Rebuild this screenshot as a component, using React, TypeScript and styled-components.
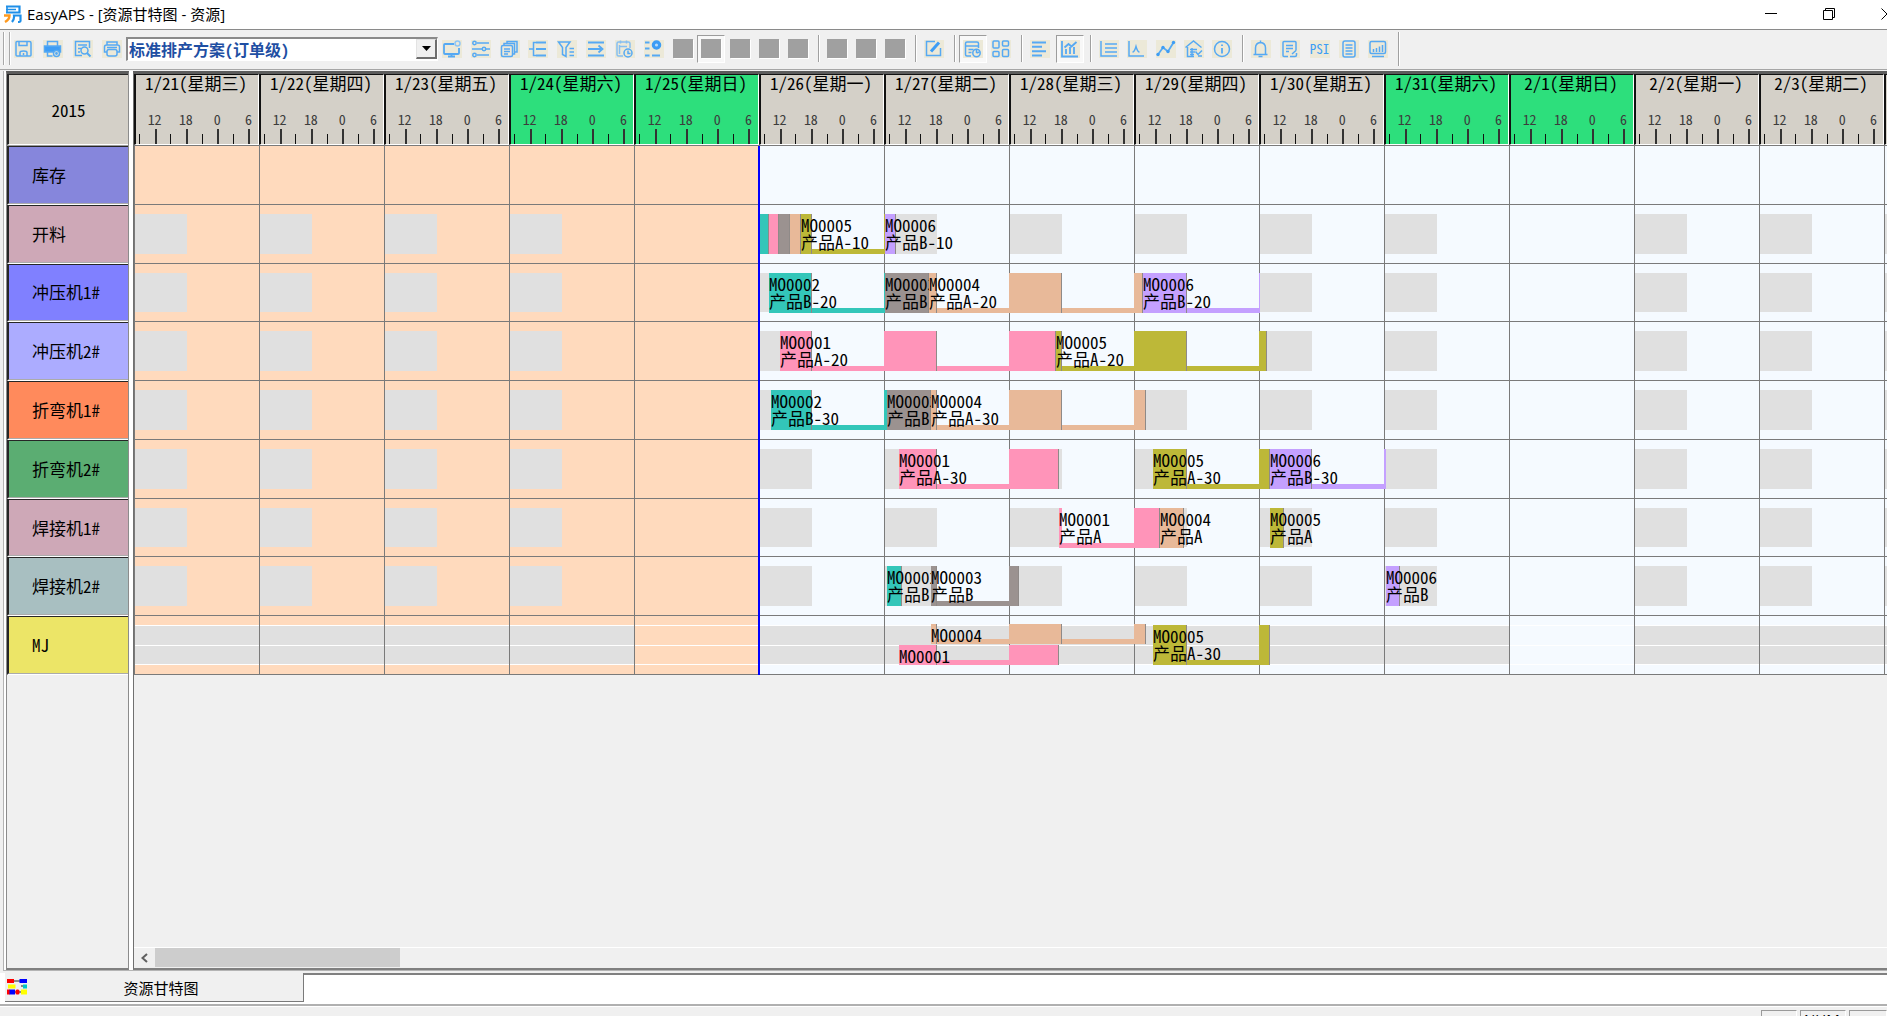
import React from "react";
import styled, { createGlobalStyle, css } from "styled-components";

/* ---------- tokens ---------- */

const MONO = `"Noto Sans Mono CJK SC", "Noto Sans CJK SC", monospace`;
const UI = `"Open Sans", "Noto Sans CJK SC", sans-serif`;

const c = {
  face: "#f0f0f0",
  header: "#d4d0c8",
  weekend: "#2ddf7c",
  past: "#ffdabd",
  future: "#f5faff",
  work: "#e0e0e0",
  line: "#7a7a7a",
  teal: "#33c6b9",
  pink: "#ff94b9",
  gray: "#9b9290",
  peach: "#e8b999",
  olive: "#bdb838",
  purple: "#c4a0ff",
};

const DAY = 125;
const SHIFT = 52;
const NOW = 5 * DAY;

/* ---------- data ---------- */

type Day = { date: string; off?: boolean; weekend?: boolean };

const days: Day[] = [
  { date: "1/21(星期三)" },
  { date: "1/22(星期四)" },
  { date: "1/23(星期五)" },
  { date: "1/24(星期六)", weekend: true },
  { date: "1/25(星期日)", weekend: true, off: true },
  { date: "1/26(星期一)" },
  { date: "1/27(星期二)" },
  { date: "1/28(星期三)" },
  { date: "1/29(星期四)" },
  { date: "1/30(星期五)" },
  { date: "1/31(星期六)", weekend: true },
  { date: "2/1(星期日)", weekend: true, off: true },
  { date: "2/2(星期一)" },
  { date: "2/3(星期二)" },
  { date: "2/4(星期三)" },
];

type Lane = "full" | "upper" | "lower";
type Task = {
  color: string;
  start: number;
  end: number;
  order?: string;
  product?: string;
  qty?: string;
  clip?: number;
  lane?: Lane;
};

type Resource = { name: string; color: string; mode: "none" | "shift" | "allDay"; tasks: Task[] };

const resources: Resource[] = [
  { name: "库存", color: "#8686dc", mode: "none", tasks: [] },
  {
    name: "开料",
    color: "#cea8b7",
    mode: "shift",
    tasks: [
      { color: c.teal, start: 625, end: 635 },
      { color: c.pink, start: 635, end: 645 },
      { color: c.gray, start: 645, end: 656 },
      { color: c.peach, start: 656, end: 667 },
      { color: c.olive, start: 667, end: 751, order: "MO0005", product: "产品A-10", qty: "500" },
      { color: c.purple, start: 751, end: 762, order: "MO0006", product: "产品B-10", qty: "500" },
    ],
  },
  {
    name: "冲压机1#",
    color: "#8080ff",
    mode: "shift",
    tasks: [
      { color: c.teal, start: 635, end: 751, order: "MO0002", product: "产品B-20", qty: "500" },
      { color: c.gray, start: 751, end: 795, order: "MO0003", product: "产品B-20", qty: "500", clip: 44 },
      { color: c.peach, start: 795, end: 1009, order: "MO0004", product: "产品A-20", qty: "500" },
      { color: c.purple, start: 1009, end: 1126, order: "MO0006", product: "产品B-20", qty: "500" },
    ],
  },
  {
    name: "冲压机2#",
    color: "#acacff",
    mode: "shift",
    tasks: [
      { color: c.pink, start: 646, end: 922, order: "MO0001", product: "产品A-20", qty: "1000" },
      { color: c.olive, start: 922, end: 1133, order: "MO0005", product: "产品A-20", qty: "500" },
    ],
  },
  {
    name: "折弯机1#",
    color: "#ff8a5c",
    mode: "shift",
    tasks: [
      { color: c.teal, start: 637, end: 753, order: "MO0002", product: "产品B-30", qty: "500" },
      { color: c.gray, start: 753, end: 797, order: "MO0003", product: "产品B-30", qty: "500", clip: 44 },
      { color: c.peach, start: 797, end: 1012, order: "MO0004", product: "产品A-30", qty: "500" },
    ],
  },
  {
    name: "折弯机2#",
    color: "#5bad72",
    mode: "shift",
    tasks: [
      { color: c.pink, start: 765, end: 925, order: "MO0001", product: "产品A-30", qty: "1000" },
      { color: c.olive, start: 1019, end: 1136, order: "MO0005", product: "产品A-30", qty: "500" },
      { color: c.purple, start: 1136, end: 1252, order: "MO0006", product: "产品B-30", qty: "500" },
    ],
  },
  {
    name: "焊接机1#",
    color: "#cea8b7",
    mode: "shift",
    tasks: [
      { color: c.pink, start: 925, end: 1026, order: "MO0001", product: "产品A", qty: "1000" },
      { color: c.peach, start: 1026, end: 1050, order: "MO0004", product: "产品A", qty: "500" },
      { color: c.olive, start: 1136, end: 1150, order: "MO0005", product: "产品A", qty: "500" },
    ],
  },
  {
    name: "焊接机2#",
    color: "#a8bfc1",
    mode: "shift",
    tasks: [
      { color: c.teal, start: 753, end: 768, order: "MO0002", product: "产品B", qty: "500", clip: 44 },
      { color: c.gray, start: 797, end: 885, order: "MO0003", product: "产品B", qty: "500" },
      { color: c.purple, start: 1252, end: 1266, order: "MO0006", product: "产品B", qty: "500" },
    ],
  },
  {
    name: "MJ",
    color: "#ece567",
    mode: "allDay",
    tasks: [
      { color: c.peach, start: 797, end: 1012, order: "MO0004", product: "产品A-30", lane: "upper" },
      { color: c.pink, start: 765, end: 925, order: "MO0001", product: "产品A-30", lane: "lower" },
      { color: c.olive, start: 1019, end: 1136, order: "MO0005", product: "产品A-30", qty: "500" },
    ],
  },
];

/* ---------- frame ---------- */

const GlobalStyle = createGlobalStyle`
  * { box-sizing: border-box; }
  html, body { margin: 0; overflow: hidden; }
  button { margin: 0; padding: 0; border: 0; background: none; font: inherit; color: inherit; }
`;

const Window = styled.div`
  display: flex;
  flex-direction: column;
  height: 100vh;
  overflow: hidden;
  background: ${c.face};
  color: #000;
  font-family: ${UI};
  font-size: 15px;
`;

const TitleBar = styled.header`
  display: flex;
  align-items: center;
  height: 29px;
  padding: 0 0 1px 3px;
  background: #fff;
  flex: none;
`;

const Title = styled.h1`
  margin: 0 0 0 5px;
  flex: 1;
  font-size: 15px;
  line-height: 28px;
  font-weight: 400;
`;

const WindowButtons = styled.div`
  display: flex;
  margin-right: -29px;
`;

const WindowButton = styled.button`
  display: grid;
  place-items: center;
  width: 58px;
  height: 28px;
`;

/* ---------- toolbar ---------- */

const ToolBar = styled.div`
  display: flex;
  align-items: center;
  height: 41px;
  flex: none;
  padding: 0 0 2px 3px;
  border-top: 1px solid #8a8a8a;
  border-bottom: 1px solid #a6a6a6;
  background: ${c.face};
`;

const Grip = styled.span`
  width: 7px;
  height: 33px;
  border: solid #a8a8a8;
  border-width: 0 1px;
  box-shadow: inset 1px 0 #fff, 1px 0 #fff;
`;

const Group = styled.div<{ $width: number }>`
  display: flex;
  justify-content: space-between;
  width: ${(p) => p.$width}px;
  flex: none;
`;

const ToolButton = styled.button<{ $pressed?: boolean }>`
  display: grid;
  place-items: center;
  width: 28px;
  height: 28px;
  ${(p) =>
    p.$pressed &&
    css`
      border: 1px solid #9c9c9c;
      border-right-color: #fff;
      border-bottom-color: #fff;
      background: #f8f8f8;
    `}
`;

const DisabledGlyph = styled.span`
  width: 20px;
  height: 19px;
  background: #a0a0a0;
  box-shadow: 1px 1px #fff;
`;

const TextGlyph = styled.span`
  width: 20px;
  height: 18px;
  background: #ece9d8;
  color: #3d9df5;
  font-family: ${MONO};
  font-size: 13px;
  font-weight: 400;
  line-height: 17px;
  text-align: center;
`;

const Separator = styled.span<{ $tall?: boolean }>`
  width: 2px;
  height: ${(p) => (p.$tall ? 34 : 27)}px;
  margin: 0 3px 0 6px;
  flex: none;
  border-left: 1px solid #a0a0a0;
  border-right: 1px solid #fff;
`;

const Combo = styled.label`
  position: relative;
  display: flex;
  width: 312px;
  height: 24px;
  border: 2px solid #8a8a8a;
  border-right: 1px solid #fff;
  border-bottom: 1px solid #fff;
  background: #fff;
`;

const Select = styled.select`
  appearance: none;
  flex: 1;
  padding: 0 22px 0 1px;
  border: 0;
  border-radius: 0;
  background: #fff;
  color: #1f4fa3;
  font-family: ${MONO};
  font-size: 16px;
  font-weight: 700;
  line-height: 20px;
`;

const ComboArrow = styled.span`
  position: absolute;
  top: 0;
  right: 0;
  display: grid;
  place-items: center;
  width: 21px;
  height: 20px;
  border: 1px solid #e3e3e3;
  border-right: 2px solid #6e6e6e;
  border-bottom: 2px solid #6e6e6e;
  background: ${c.face};
  pointer-events: none;
`;

/* ---------- workspace ---------- */

const Workspace = styled.main`
  display: flex;
  flex: 1;
  min-height: 0;
  gap: 4px;
  margin: 1px 0 0 3px;
  padding-left: 2px;
  border-left: 1px solid #b4b4b4;
  border-bottom: 1px solid #b4b4b4;
  background: #fff;
`;

const Pane = styled.section`
  display: flex;
  flex-direction: column;
  min-width: 0;
  border-top: 3px solid #5c5c5c;
  border-bottom: 2px solid #808080;
  background: ${c.face};
`;

const ResourcePane = styled(Pane)`
  width: 123px;
  flex: none;
  border-left: 1px solid #8c8c8c;
  border-right: 1px solid #8c8c8c;
`;

const ChartPane = styled(Pane)`
  flex: 1;
  border-left: 1px solid #707070;
`;

const YearCell = styled.div`
  display: grid;
  place-items: center;
  height: 71px;
  flex: none;
  border: solid #262626;
  border-width: 1px 0 1px 2px;
  border-bottom-color: #fff;
  background: ${c.header};
  font-family: ${MONO};
  font-size: 17px;
  font-weight: 300;
`;

const RowStack = styled.div`
  position: relative;
  display: grid;
  grid-template-rows: repeat(9, 1fr);
  height: 530px;
  flex: none;
  border-top: 1px solid #9a9a9a;
`;

const ResourceCell = styled.div<{ $color: string }>`
  display: flex;
  align-items: center;
  padding-left: 23px;
  border: solid #262626;
  border-width: 1px 0 2px 2px;
  border-bottom: 2px groove #fff;
  background: ${(p) => p.$color};
  font-family: ${MONO};
  font-size: 17px;
  font-weight: 300;
  line-height: 20px;
`;

const DayHeaders = styled.div`
  display: flex;
  height: 71px;
  flex: none;
  overflow: hidden;
`;

const DayHeader = styled.div<{ $weekend?: boolean }>`
  display: flex;
  flex-direction: column;
  width: ${DAY}px;
  flex: none;
  border: solid #111;
  border-width: 1px 1px 1px 2px;
  border-right-color: #fff;
  border-bottom-color: #fff;
  background: ${(p) => (p.$weekend ? c.weekend : c.header)};
  font-family: ${MONO};
  font-weight: 300;
`;

const DayName = styled.div`
  height: 40px;
  padding-right: 2px;
  font-size: 17px;
  line-height: 16px;
  text-align: center;
  white-space: nowrap;
`;

const Hours = styled.div`
  display: grid;
  grid-template-columns: repeat(4, 1fr);
  width: ${DAY}px;
  margin-left: 3px;
`;

const HourLabel = styled.div`
  height: 10px;
  font-size: 14px;
  font-weight: 400;
  line-height: 10px;
  text-align: center;
  color: #3c3c3c;
`;

const Ticks = styled.div`
  display: grid;
  grid-template-columns: 1fr 1fr;
  align-items: end;
  height: 20px;
`;

const Tick = styled.span<{ $major?: boolean }>`
  width: ${(p) => (p.$major ? 2 : 1)}px;
  height: ${(p) => (p.$major ? 15 : 10)}px;
  background: ${(p) => (p.$major ? "#333" : "#111")};
`;

const Chart = styled(RowStack)`
  overflow: hidden;
  border-top: 1px solid ${c.line};
  background: linear-gradient(to right, ${c.past} ${NOW}px, ${c.future} ${NOW}px);
`;

const ChartRow = styled.div`
  position: relative;
  display: flex;
  border-bottom: 1px solid ${c.line};
`;

const DaySlot = styled.div`
  width: ${DAY}px;
  flex: none;
  padding: 9px 0;
  border-left: 1px solid ${c.line};
`;

const ShiftBlock = styled.div<{ $visible: boolean }>`
  width: ${SHIFT}px;
  height: 100%;
  background: ${(p) => (p.$visible ? c.work : "transparent")};
`;

const AllDayBlock = styled.div<{ $visible: boolean }>`
  height: 100%;
  border: solid #fff;
  border-width: 1px 0;
  background: linear-gradient(#fff, #fff) 0 50% / 100% 1px no-repeat
    ${(p) => (p.$visible ? c.work : "transparent")};
`;

const laneBox = {
  full: css`
    top: 9px;
    height: 40px;
  `,
  upper: css`
    top: 8px;
    height: 20px;
  `,
  lower: css`
    top: 29px;
    height: 20px;
  `,
};

const TaskBox = styled.div<{ $lane: Lane }>`
  position: absolute;
  ${(p) => laneBox[p.$lane]}
`;

const ThinBar = styled.div<{ $color: string }>`
  position: absolute;
  inset: auto 0 0 0;
  height: 5px;
  background: ${(p) => p.$color};
`;

const WorkBar = styled.div<{ $color: string; $edge: boolean }>`
  position: absolute;
  top: 0;
  bottom: 0;
  border-right: ${(p) => (p.$edge ? "1px solid #8f8a88" : "0")};
  background: ${(p) => p.$color};
`;

const TaskText = styled.div`
  position: absolute;
  top: 0;
  left: 0;
  height: 100%;
  overflow: hidden;
  padding-top: 2px;
  font-family: ${MONO};
  font-size: 17px;
  font-weight: 300;
  line-height: 17px;
  white-space: pre;
`;

const NowLine = styled.div`
  position: absolute;
  top: 0;
  bottom: 0;
  left: ${NOW - 1}px;
  width: 2px;
  background: #0000ff;
`;

const EmptyArea = styled.div`
  flex: 1;
`;

const ScrollBar = styled.div`
  display: flex;
  align-items: flex-start;
  height: 21px;
  flex: none;
  border-top: 1px solid #fff;
`;

const ScrollArrow = styled.button`
  display: grid;
  place-items: center;
  width: 21px;
  height: 19px;
`;

const ScrollThumb = styled.div`
  width: 245px;
  height: 19px;
  background: #cdcdcd;
`;

/* ---------- bottom tabs and status ---------- */

const TabStrip = styled.nav`
  display: flex;
  height: 31px;
  flex: none;
  margin-top: 2px;
  padding: 0 0 2px 5px;
  background: #fff;
`;

const Tab = styled.button`
  display: flex;
  align-items: center;
  width: 299px;
  padding: 0 2px;
  border: solid #7a7a7a;
  border-width: 0 1px 1px 0;
  background: ${c.face};
  font-family: ${UI};
  font-size: 15px;
`;

const TabText = styled.span`
  flex: 1;
  padding-right: 6px;
  text-align: center;
`;

const TabFill = styled.div`
  flex: 1;
  border-top: 2px solid #808080;
`;

const StatusBar = styled.footer`
  display: flex;
  justify-content: flex-end;
  gap: 3px;
  height: 12px;
  flex: none;
  padding-top: 4px;
  border-top: 2px solid #b0b0b0;
  box-shadow: inset 0 1px #fff;
`;

const StatusPane = styled.span<{ $width: number }>`
  width: ${(p) => p.$width}px;
  height: 24px;
  padding: 1px 0 0 3px;
  border-top: 1px solid #9a9a9a;
  border-left: 1px solid #9a9a9a;
  border-right: 1px solid #fff;
  font-size: 15px;
  line-height: 15px;
`;

/* ---------- icons ---------- */

const Glyph = styled.svg`
  display: block;
  fill: none;
  stroke: #55a9f3;
  stroke-width: 1.5;
`;

const Icon = ({ children }: { children: React.ReactNode }) => (
  <Glyph width="20" height="20" viewBox="0 0 20 20" aria-hidden="true">
    <rect x="0" y="1" width="20" height="18" fill="#ece9d8" stroke="none" />
    {children}
  </Glyph>
);

const icons: Record<string, React.ReactNode> = {
  保存: (
    <Icon>
      <path d="M2 3.500q0-1 1-1h12.500q1.500 0 1.500 1.500v12q0 1-1 1H3q-1 0-1-1z M5 2.500v4h8v-4 M6 17v-3.500q0-1.500 3.500-1.500t3.500 1.500V17 M9.500 14v2" />
    </Icon>
  ),
  打印设置: (
    <Icon>
      <path d="M4.500 7V2.500h10V7" />
      <rect x="1.500" y="7" width="16" height="6" fill="#3d9df5" />
      <path d="M4.500 13v4h5" />
      <circle cx="13.500" cy="14.500" r="3" fill="#ece9d8" />
      <circle cx="13.500" cy="14.500" r=".7" />
    </Icon>
  ),
  打印预览: (
    <Icon>
      <path d="M16.500 9V2.500h-14v14H9 M5 6h9 M5 9.500h3 M5 13h2" />
      <circle cx="11.500" cy="11.500" r="3.500" />
      <path d="M14 14l3.500 3.500" strokeWidth="2" />
    </Icon>
  ),
  打印: (
    <Icon>
      <path d="M5 6V3h10v3 M5 13H2.500V8q0-2 2-2h11q2 0 2 2v5H15" />
      <rect x="5" y="10.500" width="10" height="6.500" rx="2" />
      <path d="M5 8.500h10" />
    </Icon>
  ),
  排产: (
    <Icon>
      <path d="M12 5H3q-1 0-1 1v8q0 1 1 1h13q1 0 1-1V9 M6 17.500h7 M9.500 15v2.500" strokeWidth="1.800" />
      <circle cx="15.500" cy="4.500" r="2.500" stroke="#8fc6f5" />
    </Icon>
  ),
  规则: (
    <Icon>
      <path d="M6 4h12 M1 10h10 M15 10h4 M6 16h12" />
      <circle cx="3.500" cy="4" r="1.700" />
      <circle cx="13" cy="10" r="1.700" />
      <circle cx="3.500" cy="16" r="1.700" />
    </Icon>
  ),
  复制: (
    <Icon>
      <rect x="1.500" y="6.500" width="11" height="11" rx="1.500" />
      <path d="M4 6V4.500h10.500V15H13 M7 4V2.500h10V13h-2.500 M4 10h6 M4 12.500h6 M4 15h4" />
    </Icon>
  ),
  层级: (
    <Icon>
      <path d="M8 3.500h10 M8 10h10 M8 16.500h10" strokeWidth="1.800" />
      <path d="M8 3.500H5.500v13H8 M1 10h5" />
    </Icon>
  ),
  筛选: (
    <Icon>
      <path d="M1.500 3H13L9 8.500v9l-3.500-2v-7z M12.500 9.500H17 M12.500 13H17 M12.500 16.500H17" />
    </Icon>
  ),
  移动: (
    <Icon>
      <path d="M2 3.500h16 M2 10h13 M2 16.500h16 M12.500 6.500l4 3.500-4 3.500" strokeWidth="1.800" />
    </Icon>
  ),
  计划时间: (
    <Icon>
      <path d="M8 17H3.500q-1.500 0-1.500-1.500v-11Q2 3 3.500 3h10Q15 3 15 4.500V9 M5.500 1.500v3 M11.500 1.500v3 M5 7.500h7 M4.500 6v9" stroke="#86bff0" />
      <circle cx="13" cy="14" r="4" />
      <path d="M13 11.500v3h2.500" />
    </Icon>
  ),
  定位: (
    <Icon>
      <path d="M1 3.500h4.500 M1 9.500h4.500 M1 16.500h4.500 M8 16.500h8" strokeWidth="2" />
      <circle cx="12.500" cy="6" r="4" fill="#3d9df5" stroke="#3d9df5" />
      <circle cx="12.500" cy="6" r=".8" stroke="#b8dcfa" />
    </Icon>
  ),
  编辑: (
    <Icon>
      <path d="M11 2.500H2.500v14h14V9" />
      <path d="M7 12.500l8-9" stroke="#3d9df5" strokeWidth="3" />
    </Icon>
  ),
  资源甘特图: (
    <Icon>
      <path d="M8 17H4q-1.500 0-1.500-1.500v-11Q2.500 3 4 3h10q1.500 0 1.500 1.500V9 M2.500 7h13 M5.500 10.500h5 M5.500 13.500h3" />
      <circle cx="13.500" cy="14" r="3.700" />
      <path d="M13.500 14v-3.500 M13.500 14l3-1" />
    </Icon>
  ),
  面板: (
    <Icon>
      <rect x="2" y="2" width="6" height="7" rx="1" />
      <rect x="11.500" y="2" width="6" height="5" rx="1" />
      <rect x="2" y="12.500" width="6" height="5" rx="1" />
      <rect x="11.500" y="10.500" width="6" height="7" rx="1" />
    </Icon>
  ),
  列表: (
    <Icon>
      <path d="M2 3.500h14 M2 7.800h10 M2 12.200h14 M2 16.500h10" strokeWidth="2" />
    </Icon>
  ),
  负荷图: (
    <Icon>
      <path d="M2 2v15.500h16 M6 15v-5 M10 15V8 M14 15V8 M4.500 8.500l4-3.500 3 2.500L16.500 3" strokeWidth="1.800" />
    </Icon>
  ),
  库存图: (
    <Icon>
      <path d="M2 2v15h16 M6 5h12 M6 9h12 M6 13h12" />
    </Icon>
  ),
  曲线: (
    <Icon>
      <path d="M2 2v15h15 M5.500 13q2 0 3.500-5.500 1.500 5.500 3.500 5.500" />
    </Icon>
  ),
  折线图: (
    <Icon>
      <path d="M2 15.500l5-7 5 4 5.500-9" strokeWidth="1.800" />
      <g fill="#3d9df5" stroke="none">
        <circle cx="2" cy="15.500" r="1.700" />
        <circle cx="7" cy="8.500" r="1.700" />
        <circle cx="12" cy="12.500" r="1.700" />
        <circle cx="17.500" cy="3.500" r="1.700" />
      </g>
    </Icon>
  ),
  仓库: (
    <Icon>
      <path d="M1.500 8.500L9.500 2l8 6.500 M3.500 8v9.500H10 M6 10.500h7 M6 13h5 M6 15.500h4 M8 9v8" />
      <path d="M11.500 12.500l2.500 3 4-4 M14 17h4" />
    </Icon>
  ),
  信息: (
    <Icon>
      <circle cx="10" cy="10" r="7.500" />
      <path d="M10 9v5.500 M10 5.500v1.500" strokeWidth="1.800" />
    </Icon>
  ),
  提醒: (
    <Icon>
      <path d="M2.500 15.500h14 M4.500 15.500V9q0-5 5-5.500 5 .5 5 5.500v6.500 M9.500 1.500v2 M7.500 17.500h4" />
    </Icon>
  ),
  报告: (
    <Icon>
      <path d="M8 17.500H4q-1 0-1-1v-13q0-1 1-1h11q1 0 1 1v8 M6 6.500h7 M6 9.500h7 M6 12.500h3 M10 17.500h5q1.500 0 1.500-1.500v-2 M12 15l4-3.500" />
    </Icon>
  ),
  PSI: <TextGlyph>PSI</TextGlyph>,
  明细: (
    <Icon>
      <rect x="4" y="2" width="12" height="16" rx="2" />
      <path d="M6.500 6h7 M6.500 9h7 M6.500 12h7 M6.500 15h7" />
    </Icon>
  ),
  统计: (
    <Icon>
      <rect x="2" y="2.500" width="15.500" height="12" rx="1.500" />
      <path d="M5.500 13v-3 M8.500 13V9 M11.500 13V7.500 M14.500 13V6 M4 17.500h12" />
    </Icon>
  ),
};

const Tool = ({ name, pressed }: { name: string; pressed?: boolean }) => (
  <ToolButton type="button" aria-label={name} $pressed={pressed}>
    {icons[name]}
  </ToolButton>
);

const Blank = ({ pressed }: { pressed?: boolean }) => (
  <ToolButton type="button" aria-label="不可用" $pressed={pressed}>
    <DisabledGlyph />
  </ToolButton>
);

const AppLogo = () => (
  <svg width="19" height="18" viewBox="0 0 19 18" fill="none" aria-hidden="true">
    <path d="M3 1.500h13.500v6H3" stroke="#1f8fe8" strokeWidth="2.200" />
    <path d="M3 4.500h10 M4 1v7" stroke="#1f8fe8" strokeWidth="1.600" />
    <path d="M1 10.500h5.500q0 4-4.500 6.500" stroke="#ff9a1f" strokeWidth="2.400" />
    <path d="M9 17q2.500-3 2-6.500h6.500V16q0 1-2.500 1" stroke="#1f8fe8" strokeWidth="2.200" />
  </svg>
);

const GanttLogo = () => (
  <svg width="20" height="16" viewBox="0 0 20 16" aria-hidden="true">
    <path d="M7 2h6 M14 7h3 M5 13h12" stroke="#222" />
    <rect width="7" height="4" fill="#f00" />
    <rect x="12.500" width="7.500" height="4" fill="#00f" />
    <rect x="1" y="5.500" width="7.500" height="4" fill="#ff0" />
    <rect x="16" y="5.500" width="4" height="4" fill="#00c8c8" />
    <rect y="10.500" width="3" height="5" fill="#f00" />
    <rect x="2.500" y="10.500" width="5.500" height="5" fill="#00f" />
    <rect x="8.500" y="10.500" width="4" height="5" rx="1.500" fill="#f00" />
    <rect x="14" y="10.500" width="6" height="5" fill="#ff0" />
  </svg>
);

/* ---------- chart parts ---------- */

/** Parts of a task that fall inside the working shift of each day. */
const workParts = (start: number, end: number) =>
  days
    .map((_, i) => ({
      from: Math.max(start, i * DAY),
      to: Math.min(end, i * DAY + SHIFT + 1),
    }))
    .filter((p) => p.to > p.from);

const TaskView = ({ task }: { task: Task }) => (
  <TaskBox $lane={task.lane ?? "full"} style={{ left: task.start, width: task.end - task.start }}>
    <ThinBar $color={task.color} />
    {workParts(task.start, task.end).map((p) => (
      <WorkBar
        key={p.from}
        $color={task.color}
        $edge={p.to - p.from > 3}
        style={{ left: p.from - task.start, width: p.to - p.from }}
      />
    ))}
    {task.order && (
      <TaskText style={{ width: task.clip }}>{[task.order, task.product, task.qty].filter(Boolean).join("\n")}</TaskText>
    )}
  </TaskBox>
);

const ResourceRow = ({ resource }: { resource: Resource }) => (
  <ChartRow>
    {days.map((d) => (
      <DaySlot key={d.date}>
        {resource.mode === "shift" && <ShiftBlock $visible={!d.off} />}
        {resource.mode === "allDay" && <AllDayBlock $visible={!d.off} />}
      </DaySlot>
    ))}
    {resource.tasks.map((t) => (
      <TaskView key={t.start} task={t} />
    ))}
  </ChartRow>
);

export default function App() {
  return (
    <Window>
      <GlobalStyle />
      <TitleBar>
        <AppLogo />
        <Title>EasyAPS - [资源甘特图 - 资源]</Title>
        <WindowButtons>
          <WindowButton type="button" aria-label="最小化">
            <svg width="12" height="12" viewBox="0 0 12 12" stroke="#000">
              <path d="M0 5.500h12" />
            </svg>
          </WindowButton>
          <WindowButton type="button" aria-label="还原">
            <svg width="12" height="12" viewBox="0 0 12 12" stroke="#000" fill="none">
              <path d="M.5 2.500h9v9h-9z M2.500 2.500v-2h9v9h-2" />
            </svg>
          </WindowButton>
          <WindowButton type="button" aria-label="关闭">
            <svg width="12" height="12" viewBox="0 0 12 12" stroke="#000">
              <path d="M.5.500l11 11 M11.500.500l-11 11" />
            </svg>
          </WindowButton>
        </WindowButtons>
      </TitleBar>

      <ToolBar role="toolbar">
        <Grip />
        <Group $width={116}>
          <Tool name="保存" />
          <Tool name="打印设置" />
          <Tool name="打印预览" />
          <Tool name="打印" />
        </Group>
        <Combo>
          <Select aria-label="排产方案">
            <option>标准排产方案(订单级)</option>
          </Select>
          <ComboArrow>
            <svg width="9" height="5" viewBox="0 0 9 5">
              <path d="M0 0h9L4.500 5z" />
            </svg>
          </ComboArrow>
        </Combo>
        <Group $width={374}>
          <Tool name="排产" />
          <Tool name="规则" />
          <Tool name="复制" />
          <Tool name="层级" />
          <Tool name="筛选" />
          <Tool name="移动" />
          <Tool name="计划时间" />
          <Tool name="定位" />
          <Blank />
          <Blank pressed />
          <Blank />
          <Blank />
          <Blank />
        </Group>
        <Separator />
        <Group $width={86}>
          <Blank />
          <Blank />
          <Blank />
        </Group>
        <Separator />
        <Group $width={28}>
          <Tool name="编辑" />
        </Group>
        <Separator />
        <Group $width={56}>
          <Tool name="资源甘特图" pressed />
          <Tool name="面板" />
        </Group>
        <Separator />
        <Group $width={58}>
          <Tool name="列表" />
          <Tool name="负荷图" pressed />
        </Group>
        <Separator />
        <Group $width={141}>
          <Tool name="库存图" />
          <Tool name="曲线" />
          <Tool name="折线图" />
          <Tool name="仓库" />
          <Tool name="信息" />
        </Group>
        <Separator />
        <Group $width={145}>
          <Tool name="提醒" />
          <Tool name="报告" />
          <Tool name="PSI" />
          <Tool name="明细" />
          <Tool name="统计" />
        </Group>
        <Separator $tall />
      </ToolBar>

      <Workspace>
        <ResourcePane>
          <YearCell>2015</YearCell>
          <RowStack>
            {resources.map((r) => (
              <ResourceCell key={r.name} $color={r.color}>
                {r.name}
              </ResourceCell>
            ))}
          </RowStack>
        </ResourcePane>
        <ChartPane>
          <DayHeaders>
            {days.map((d) => (
              <DayHeader key={d.date} $weekend={d.weekend}>
                <DayName>{d.date}</DayName>
                <Hours>
                  {["12", "18", "0", "6"].map((h) => (
                    <div key={h}>
                      <HourLabel>{h}</HourLabel>
                      <Ticks>
                        <Tick />
                        <Tick $major />
                      </Ticks>
                    </div>
                  ))}
                </Hours>
              </DayHeader>
            ))}
          </DayHeaders>
          <Chart>
            {resources.map((r) => (
              <ResourceRow key={r.name} resource={r} />
            ))}
            <NowLine />
          </Chart>
          <EmptyArea />
          <ScrollBar>
            <ScrollArrow type="button" aria-label="向左滚动">
              <svg width="8" height="10" viewBox="0 0 8 10" fill="none" stroke="#606060" strokeWidth="2">
                <path d="M6 1L1.500 5 6 9" />
              </svg>
            </ScrollArrow>
            <ScrollThumb />
          </ScrollBar>
        </ChartPane>
      </Workspace>

      <TabStrip>
        <Tab type="button">
          <GanttLogo />
          <TabText>资源甘特图</TabText>
        </Tab>
        <TabFill />
      </TabStrip>
      <StatusBar>
        <StatusPane $width={36} />
        <StatusPane $width={46}>NUM</StatusPane>
        <StatusPane $width={38} />
      </StatusBar>
    </Window>
  );
}
